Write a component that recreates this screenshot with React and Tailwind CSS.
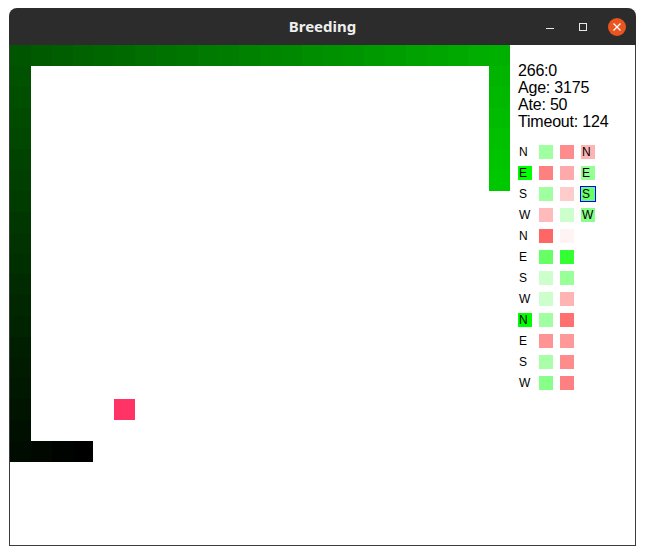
import React from 'react'

// snake path, tail first (black) -> head (bright green)
const buildSnake = () => {
  const cells = []
  for (let c = 3; c >= 0; c--) cells.push([c, 19])
  for (let r = 18; r >= 0; r--) cells.push([0, r])
  for (let c = 1; c <= 23; c++) cells.push([c, 0])
  for (let r = 1; r <= 6; r++) cells.push([23, r])
  return cells
}

const snake = buildSnake()
const food = [5, 17]

const rows = [
  { d: 'N', a: '#a0ffa0', b: '#ff8c8c', out: { d: 'N', bg: '#ffb4b4' } },
  { d: 'E', hi: true, a: '#ff8080', b: '#ffaaaa', out: { d: 'E', bg: '#94ff94' } },
  { d: 'S', a: '#a0ffa0', b: '#ffcccc', out: { d: 'S', bg: '#66ff66', sel: true } },
  { d: 'W', a: '#ffbbbb', b: '#ccffcc', out: { d: 'W', bg: '#88ff88' } },
  { d: 'N', a: '#ff6666', b: '#fff4f4' },
  { d: 'E', a: '#66ff66', b: '#33ff33' },
  { d: 'S', a: '#ccffcc', b: '#99ff99' },
  { d: 'W', a: '#ccffcc', b: '#ffb4b4' },
  { d: 'N', hi: true, a: '#a0ffa0', b: '#ff7070' },
  { d: 'E', a: '#ff9494', b: '#ff9898' },
  { d: 'S', a: '#a8ffa8', b: '#ff8c8c' },
  { d: 'W', a: '#88ff88', b: '#ff8080' },
]

const TitleBar = () => (
  <div className="grid h-[37px] grid-cols-[1fr_auto_1fr] items-center rounded-t-[8px] bg-[#2c2c2c]">
    <div />
    <div className="text-[15px] font-bold text-[#efefef] [font-family:'Noto_Sans',sans-serif]">
      Breeding
    </div>
    <div className="flex items-center justify-end pr-[10px]">
      <div className="mt-[4px] h-[1.5px] w-[8px] bg-[#e8e8e8]" />
      <div className="ml-[25px] h-[8px] w-[8px] border border-[#e8e8e8]" />
      <div className="ml-[21px] flex h-[18px] w-[18px] items-center justify-center rounded-full bg-[#e95420]">
        <svg width="8" height="8" viewBox="0 0 8 8">
          <path d="M0.5 0.5 L7.5 7.5 M7.5 0.5 L0.5 7.5" stroke="#ffffff" strokeWidth="1.3" />
        </svg>
      </div>
    </div>
  </div>
)

const Board = () => (
  <div className="grid h-[500px] w-[500px] shrink-0 grid-cols-[repeat(24,1fr)] grid-rows-[repeat(24,1fr)]">
    {snake.map(([c, r], i) => (
      <div
        key={i}
        style={{
          gridColumn: c + 1,
          gridRow: r + 1,
          backgroundColor: `rgb(0, ${Math.round((200 * i) / (snake.length - 1))}, 0)`,
        }}
      />
    ))}
    <div style={{ gridColumn: food[0] + 1, gridRow: food[1] + 1 }} className="bg-[#ff3366]" />
  </div>
)

const Box = ({ bg, children, sel }) => (
  <div
    className={`h-[14px] w-[14px] pl-[1px] text-[12px] leading-[14px] text-black ${sel ? 'ring-1 ring-[#0000ff]' : ''}`}
    style={bg ? { backgroundColor: bg } : undefined}
  >
    {children}
  </div>
)

const Panel = () => (
  <div className="flex-1 pl-[8px] pt-[17px] [font-family:'Liberation_Sans',Arial,sans-serif]">
    <div className="text-[16px] leading-[17px] tracking-[-0.2px] text-black">
      <div>266:0</div>
      <div>Age: 3175</div>
      <div>Ate: 50</div>
      <div>Timeout: 124</div>
    </div>
    <div className="mt-[15px] grid grid-cols-[repeat(4,14px)] gap-[7px]">
      {rows.map((row, i) => (
        <React.Fragment key={i}>
          <Box bg={row.hi ? '#00ff00' : null}>{row.d}</Box>
          <Box bg={row.a} />
          <Box bg={row.b} />
          {row.out ? (
            <Box bg={row.out.bg} sel={row.out.sel}>
              {row.out.d}
            </Box>
          ) : (
            <div />
          )}
        </React.Fragment>
      ))}
    </div>
  </div>
)

export default function App() {
  return (
    <div className="h-[555px] w-[645px] bg-white pl-[9px] pt-[8px]">
      <div className="w-[627px]">
        <TitleBar />
        <div className="flex h-[501px] border-x border-b border-[#3c3c3c] bg-white">
          <Board />
          <Panel />
        </div>
      </div>
    </div>
  )
}
